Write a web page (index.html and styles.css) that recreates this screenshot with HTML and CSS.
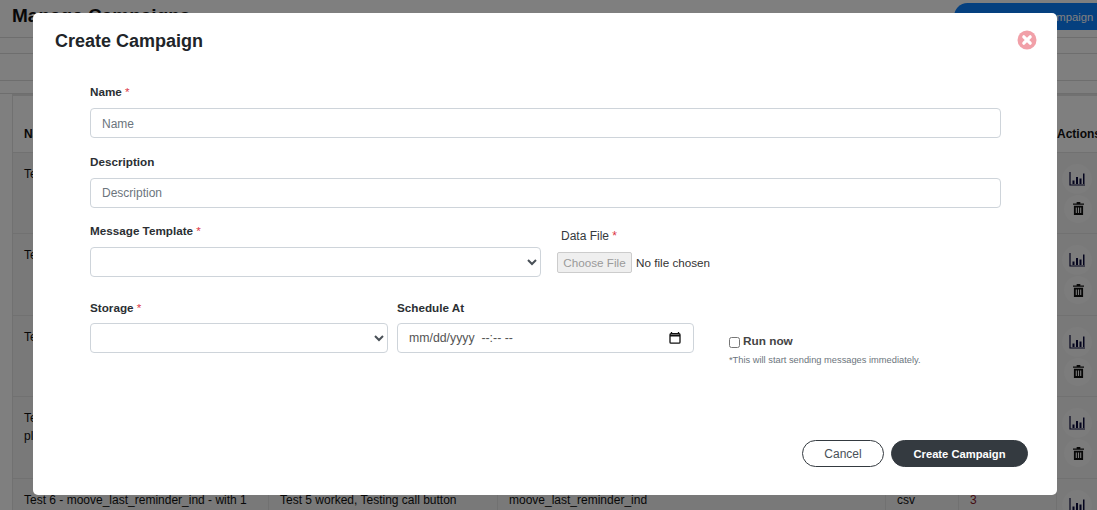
FILE: index.html
```html
<!DOCTYPE html>
<html lang="en">
<head>
<meta charset="utf-8">
<title>Create Campaign</title>
<link rel="stylesheet" href="styles.css">
</head>
<body>
<div class="page">
  <header class="page-head">
    <h1>Manage Campaigns</h1>
    <button class="new-btn" type="button">Create New Campaign</button>
  </header>
  <div class="filter-bar"></div>
  <table class="grid">
    <colgroup><col class="c1"><col class="c2"><col class="c3"><col class="c4"><col class="c5"><col class="c6"></colgroup>
    <thead><tr><th>Name</th><th>Description</th><th>Template</th><th>Type</th><th>Sent</th><th>Actions</th></tr></thead>
    <tbody>
      <tr><td>Test 1</td><td></td><td></td><td></td><td></td><td class="acts"><span class="round"><svg class="ic" viewBox="0 0 16 14"><path d="M1 0v13h15" fill="none" stroke="currentColor" stroke-width="1.2"/><path d="M3.500 8.500h2V12h-2zM7 5h2v7H7zM10.500 6.500h2V12h-2zM14 1.500h1.500V12H14z" fill="currentColor"/></svg></span><span class="round shift"><svg class="ic trash" viewBox="0 0 12 14"><path d="M4 0h4v1.500h4V3H0V1.500h4zM1 4h10v10H1zM3 6v6h1.200V6zm2.400 0v6h1.200V6zm2.400 0v6H9V6z" fill="currentColor" fill-rule="evenodd"/></svg></span></td></tr>
      <tr><td>Test 2</td><td></td><td></td><td></td><td></td><td class="acts"><span class="round"><svg class="ic" viewBox="0 0 16 14"><path d="M1 0v13h15" fill="none" stroke="currentColor" stroke-width="1.2"/><path d="M3.500 8.500h2V12h-2zM7 5h2v7H7zM10.500 6.500h2V12h-2zM14 1.500h1.500V12H14z" fill="currentColor"/></svg></span><span class="round shift"><svg class="ic trash" viewBox="0 0 12 14"><path d="M4 0h4v1.500h4V3H0V1.500h4zM1 4h10v10H1zM3 6v6h1.200V6zm2.400 0v6h1.200V6zm2.400 0v6H9V6z" fill="currentColor" fill-rule="evenodd"/></svg></span></td></tr>
      <tr><td>Test 3</td><td></td><td></td><td></td><td></td><td class="acts"><span class="round"><svg class="ic" viewBox="0 0 16 14"><path d="M1 0v13h15" fill="none" stroke="currentColor" stroke-width="1.2"/><path d="M3.500 8.500h2V12h-2zM7 5h2v7H7zM10.500 6.500h2V12h-2zM14 1.500h1.500V12H14z" fill="currentColor"/></svg></span><span class="round shift"><svg class="ic trash" viewBox="0 0 12 14"><path d="M4 0h4v1.500h4V3H0V1.500h4zM1 4h10v10H1zM3 6v6h1.200V6zm2.400 0v6h1.200V6zm2.400 0v6H9V6z" fill="currentColor" fill-rule="evenodd"/></svg></span></td></tr>
      <tr><td>Test 5 please<br>please</td><td></td><td></td><td></td><td></td><td class="acts"><span class="round"><svg class="ic" viewBox="0 0 16 14"><path d="M1 0v13h15" fill="none" stroke="currentColor" stroke-width="1.2"/><path d="M3.500 8.500h2V12h-2zM7 5h2v7H7zM10.500 6.500h2V12h-2zM14 1.500h1.500V12H14z" fill="currentColor"/></svg></span><span class="round shift"><svg class="ic trash" viewBox="0 0 12 14"><path d="M4 0h4v1.500h4V3H0V1.500h4zM1 4h10v10H1zM3 6v6h1.200V6zm2.400 0v6h1.200V6zm2.400 0v6H9V6z" fill="currentColor" fill-rule="evenodd"/></svg></span></td></tr>
      <tr><td>Test 6 - moove_last_reminder_ind - with 1</td><td>Test 5 worked, Testing call button</td><td>moove_last_reminder_ind</td><td>csv</td><td class="red">3</td><td class="acts"><span class="round"><svg class="ic" viewBox="0 0 16 14"><path d="M1 0v13h15" fill="none" stroke="currentColor" stroke-width="1.2"/><path d="M3.500 8.500h2V12h-2zM7 5h2v7H7zM10.500 6.500h2V12h-2zM14 1.500h1.500V12H14z" fill="currentColor"/></svg></span></td></tr>
    </tbody>
  </table>
</div>

<div class="backdrop"></div>

<section class="modal">
  <header class="modal-head">
    <h2>Create Campaign</h2>
    <button class="close" type="button" aria-label="Close">
      <svg viewBox="0 0 20 20"><circle cx="10" cy="10" r="9.500" fill="#f1a0a8"/><path d="M6.800 6.800l6.400 6.400M13.200 6.800l-6.400 6.400" stroke="#fff" stroke-width="3.200" stroke-linecap="round"/></svg>
    </button>
  </header>
  <form class="form">
    <div class="field f-name">
      <label class="lbl">Name <i>*</i></label>
      <input class="ctl" type="text" placeholder="Name">
    </div>
    <div class="field f-desc">
      <label class="lbl">Description</label>
      <input class="ctl" type="text" placeholder="Description">
    </div>
    <div class="row r-one">
      <div class="field w-template">
        <label class="lbl">Message Template <i>*</i></label>
        <select class="ctl"></select>
      </div>
      <div class="field w-file">
        <label class="lbl file-lbl">Data File <i>*</i></label>
        <div class="file-row"><span class="file-btn">Choose File</span><span class="file-none">No file chosen</span></div>
      </div>
    </div>
    <div class="row r-two">
      <div class="field w-storage">
        <label class="lbl">Storage <i>*</i></label>
        <select class="ctl"></select>
      </div>
      <div class="field w-sched">
        <label class="lbl">Schedule At</label>
        <div class="ctl date">
          <span>mm/dd/yyyy&nbsp; --:-- --</span>
          <svg viewBox="0 0 12 12"><path d="M2.500 0v1.500M9.500 0v1.500" stroke="#111" stroke-width="1.300"/><rect x="1" y="1.700" width="10" height="9.500" rx="1" fill="none" stroke="#111" stroke-width="1.300"/><path d="M1 3.500h10" stroke="#111" stroke-width="2"/></svg>
        </div>
      </div>
      <div class="run">
        <label class="run-lbl"><input type="checkbox"> Run now</label>
        <small>*This will start sending messages immediately.</small>
      </div>
    </div>
    <footer class="actions">
      <button class="btn ghost" type="button">Cancel</button>
      <button class="btn solid" type="button">Create Campaign</button>
    </footer>
  </form>
</section>
</body>
</html>
```
FILE: styles.css
```css
* { box-sizing: border-box; }
html, body { margin: 0; height: 510px; overflow: hidden; }
body { font-family: "Liberation Sans", Arial, sans-serif; background: #fff; color: #212529; }

.page { width: 1097px; height: 510px; overflow: hidden; }
.page-head { height: 38px; border-bottom: 1px solid #ddd; display: flex; justify-content: space-between; align-items: flex-start; padding: 3px 0 0 12px; }
.page-head h1 { margin: 1px 0 0; font: 700 19px/24px "Liberation Sans", Arial, sans-serif; color: #111; }
.new-btn { width: 143px; height: 27px; border: 0; border-radius: 14px 0 0 14px; background: #0a80ff; color: #fff; font: 11.300px "Liberation Sans", sans-serif; text-align: left; padding: 0 0 0 25px; white-space: nowrap; }
.filter-bar { height: 56px; border-bottom: 1px solid #ddd; background: linear-gradient(#fff 15px, #ddd 15px, #ddd 16px, #fff 16px, #fff 42px, #ddd 42px, #ddd 43px, #fff 43px); }

.grid { margin-left: 12px; width: 1108px; border-collapse: collapse; table-layout: fixed; font: 12px/18px "Liberation Sans", sans-serif; color: #111; }
.c1 { width: 256px; } .c2 { width: 229px; } .c3 { width: 388px; } .c4 { width: 73px; } .c5 { width: 98px; } .c6 { width: 64px; }
.grid th { height: 57px; text-align: left; padding: 21px 11px 0; border: 1px solid #e3e3e3; border-top-width: 2px; font-weight: 700; }
.grid th:last-child { padding-left: 0; white-space: nowrap; }
.grid td { height: 81.600px; vertical-align: top; padding: 12px 11px 0; border: 1px solid #e3e3e3; background: #f2f2f2; white-space: normal; }
.red { color: #8b1a26; }
.grid td.acts { padding: 11px 0 0 0; }
.round { width: 30px; height: 30px; margin: 0 0 1px 5px; border-radius: 50%; background: #f8f8f8; display: flex; align-items: center; justify-content: center; color: #0a0a3c; }
.round.shift { width: 28px; height: 28px; margin: 0 0 0 7px; color: #111; }
.ic { width: 16px; height: 14px; }
.ic.trash { width: 11px; height: 13px; }

.backdrop { position: fixed; inset: 0; background: rgba(0, 0, 0, .5); }

.modal { position: fixed; left: 33px; top: 13px; width: 1024px; height: 482px; background: #fff; border-radius: 5px; }
.modal-head { display: flex; justify-content: space-between; align-items: center; height: 56px; padding: 0 20px 0 22px; }
.modal-head h2 { margin: 0; font: 700 18px/24px "Liberation Sans", sans-serif; color: #212529; }
.close { width: 20px; height: 20px; padding: 0; margin-top: -2px; border: 0; background: none; }
.close svg { display: block; width: 20px; height: 20px; }

.form { padding: 14px 56px 0 57px; }
.field { display: flex; flex-direction: column; }
.lbl { font: 700 11.700px/18px "Liberation Sans", sans-serif; color: #2b2f33; margin-bottom: 7px; }
.lbl i { font-style: normal; font-weight: 400; color: #dc3545; }
.ctl { height: 30px; width: 100%; border: 1px solid #ced4da; border-radius: 4px; background: #fff; padding: 0 11px; font: 12px "Liberation Sans", sans-serif; color: #495057; }
.ctl::placeholder { color: #6c757d; opacity: 1; }
select.ctl { padding: 0 6px 0 4px; }
.f-name { height: 70px; }
.f-name .ctl { padding-top: 1px; }
.f-desc { height: 69px; }
.row { display: flex; }
.r-one { height: 77px; }
.w-template { width: 451px; }
.w-file { margin-left: 16px; padding-top: 5px; }
.file-lbl { padding-left: 4px; margin-bottom: 7px; font: 400 12px/18px "Liberation Sans", sans-serif; color: #343a40; }
.file-row { display: flex; align-items: center; font: 11.700px "Liberation Sans", sans-serif; color: #333; }
.file-btn { width: 75px; height: 21px; border: 1px solid #ccc; border-radius: 2px; background: #efefef; color: #9a9a9a; display: flex; align-items: center; justify-content: center; margin-right: 4px; }
.w-storage { width: 298px; }
.w-sched { width: 297px; margin-left: 9px; }
.r-two .lbl { margin-bottom: 6px; }
.date { display: flex; align-items: center; justify-content: space-between; padding-right: 12px; color: #555; font-size: 12.300px; }
.date svg { width: 12px; height: 12px; }
.run { margin-left: 35px; padding-top: 34px; display: flex; flex-direction: column; }
.run-lbl { display: flex; align-items: center; font: 700 11.800px/16px "Liberation Sans", sans-serif; color: #444; }
.run-lbl input { width: 11px; height: 11px; margin: 2px 3px 0 0; }
.run small { margin-top: 5px; font: 9.300px/12px "Liberation Sans", sans-serif; color: #6c757d; white-space: nowrap; }
.actions { position: absolute; right: 29px; bottom: 28px; display: flex; gap: 7px; }
.btn { height: 27px; border-radius: 14px; font: 12px "Liberation Sans", sans-serif; }
.ghost { width: 82px; background: #fff; border: 1px solid #343a40; color: #495057; }
.solid { width: 137px; background: #343a40; border: 1px solid #343a40; color: #fff; font-weight: 700; font-size: 11.200px; }
```
